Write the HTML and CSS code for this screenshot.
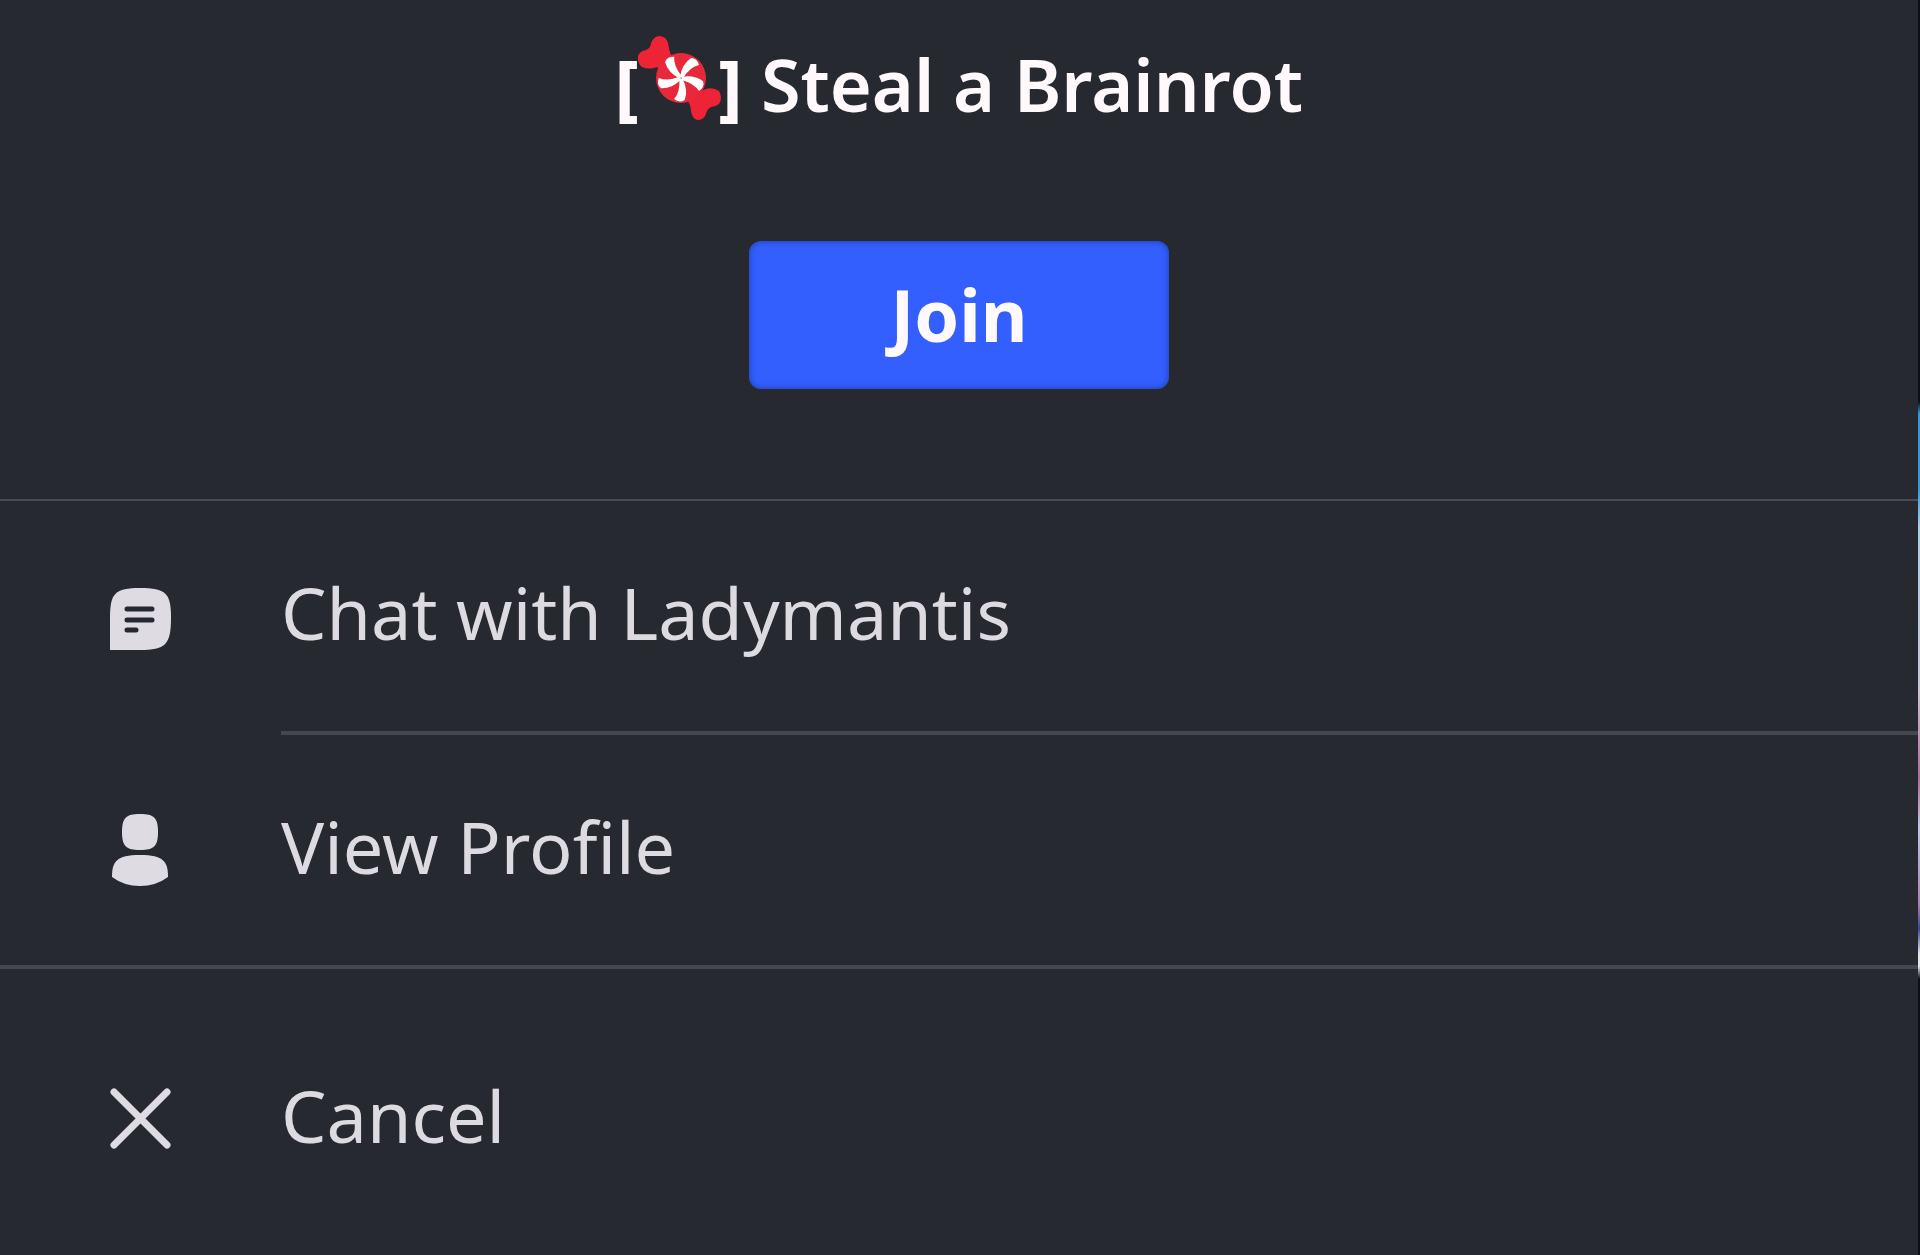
FILE: index.html
```html
<!DOCTYPE html>
<html lang="en">
<head>
  <meta charset="UTF-8">
  <meta name="viewport" content="width=device-width, initial-scale=1.0">
  <title>Steal a Brainrot</title>
  <link rel="stylesheet" href="styles.css">
</head>
<body>
  <main class="sheet">
    <header class="game">
      <h1 class="title"><span class="bracket">[</span><svg class="candy" viewBox="0 0 84 84" role="img" aria-label="candy">
        <g fill="#ee2436">
          <path d="M32 40 L20 31 Q12 34 5 31 Q0 27 1 20 Q3 15 9 14 Q14 12 14 7 Q16 1 22 0 Q29 0 31 7 Q32 14 34 19 L42 30 Z"/>
          <path d="M54 44 L64 55 L69 53 Q76 51 82 55 Q86 62 82 68 Q78 71 74 71 Q70 73 69 78 Q67 84 60 84 Q55 82 54 75 Q54 69 50 64 L46 56 Z"/>
        </g>
        <circle cx="44" cy="42" r="25" fill="#e8283b"/>
        <g fill="#fff">
          <path id="swirl" d="M43 41 Q45 28 54 22 Q60 22 62 29 Q53 31 46 42 Z"/>
          <use href="#swirl" transform="rotate(72 44 42)"/>
          <use href="#swirl" transform="rotate(144 44 42)"/>
          <use href="#swirl" transform="rotate(216 44 42)"/>
          <use href="#swirl" transform="rotate(288 44 42)"/>
        </g>
      </svg><span class="bracket">]</span> Steal a Brainrot</h1>
      <button type="button" class="join">Join</button>
    </header>

    <ul class="menu">
      <li class="item">
        <button type="button" class="row">
          <svg class="icon" viewBox="0 0 84 84" aria-hidden="true">
            <path fill="#dedbe3" d="M12 74 V42 C12 17 17 12 42 12 C68 12 73 17 73 42 C73 69 67 74 42 74 Z"/>
            <path stroke="#242830" stroke-width="5" stroke-linecap="round" d="M29 33 H54 M29 44 H54 M29 54 H38"/>
          </svg>
          <span class="label">Chat with Ladymantis</span>
        </button>
      </li>
      <li class="item">
        <button type="button" class="row">
          <svg class="icon" viewBox="0 0 84 84" aria-hidden="true">
            <path fill="#dedbe3" d="M24 22 C24 8 28 4 42 4 C56 4 60 8 60 22 C60 36 56 40 42 40 C28 40 24 36 24 22 Z"/>
            <path fill="#dedbe3" d="M14 67 C14 52 18 45 42 45 C66 45 70 52 70 67 Q58 76 42 76 Q26 76 14 67 Z"/>
          </svg>
          <span class="label">View Profile</span>
        </button>
      </li>
      <li class="item cancel">
        <button type="button" class="row">
          <svg class="icon" viewBox="0 0 84 84" aria-hidden="true">
            <path stroke="#dedbe3" stroke-width="7" stroke-linecap="round" d="M16 13 L69 66 M69 13 L16 66"/>
          </svg>
          <span class="label">Cancel</span>
        </button>
      </li>
    </ul>
  </main>
  <div class="edge"></div>
</body>
</html>
```
FILE: styles.css
```css
* {
  box-sizing: border-box;
}
body {
  margin: 0;
  min-height: 100vh;
  display: flex;
  background-color: #262930;
  font-family: "Noto Sans", sans-serif;
  color: #dedbe0;
}
button {
  font-family: inherit;
  border: none;
  cursor: pointer;
}
.sheet {
  flex: 1;
}
.game {
  display: flex;
  flex-direction: column;
  align-items: center;
  gap: 108px;
  padding: 35px 0 110px;
  border-bottom: 2px solid #494b54;
}
.title {
  margin: 0;
  font-size: 72px;
  line-height: 98px;
  font-weight: 600;
  color: #fff9fc;
}
.bracket {
  font-weight: 800;
}
.candy {
  width: 84px;
  height: 84px;
  margin: 0 -2px;
  vertical-align: -8px;
}
.join {
  width: 420px;
  max-width: 100%;
  height: 148px;
  padding: 0 0 2px;
  border-radius: 12px;
  background-color: #335fff;
  box-shadow: inset 0 0 6px #1d3c9c;
  font-size: 72px;
  line-height: 96px;
  font-weight: 700;
  color: #fff9fc;
}
.menu {
  margin: 0;
  padding: 0;
  list-style: none;
}
.row {
  display: flex;
  align-items: flex-end;
  gap: 99px;
  width: 100%;
  padding: 0 0 0 98px;
  background: none;
  color: inherit;
  text-align: left;
}
.label {
  flex: 1;
  padding: 63px 0 71px;
  border-bottom: 4px solid #444650;
  font-size: 72px;
  line-height: 96px;
}
.icon {
  width: 84px;
  height: 84px;
  margin-bottom: 75px;
  fill: none;
}
.cancel {
  border-top: 4px solid #444650;
}
.item:nth-child(2) .label,
.cancel .label {
  border-bottom: none;
}
.item:nth-child(2) .icon,
.cancel .icon {
  margin-bottom: 71px;
}
.cancel .label {
  padding-top: 98px;
}
/* sliver of the page behind the sheet */
.edge {
  width: 2px;
  background: linear-gradient(#0d0f13 32%, #2e9ce0 33%, #2e9ce0 39%, #a9cdea 42%, #c9c3d2 55%, #b56a9b 62%, #bfc6e0 66%, #a883b5 72%, #3a4a94 74%, #e4e4ea 76%, #e4e4ea 77%, #0d0f13 78%);
}
```
